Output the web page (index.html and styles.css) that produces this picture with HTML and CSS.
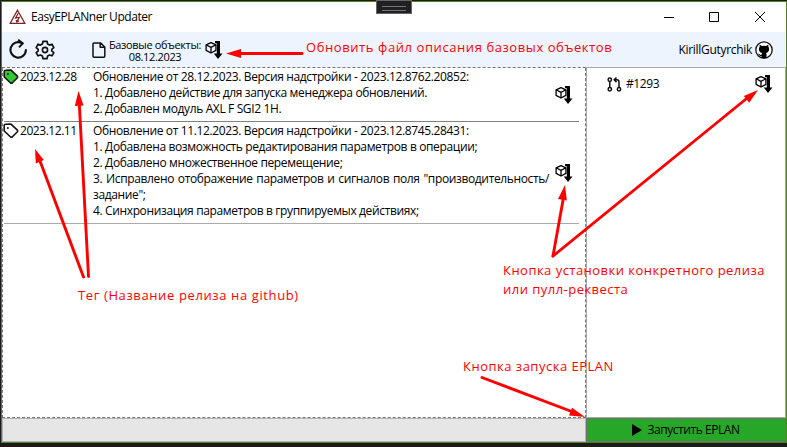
FILE: index.html
```html
<!DOCTYPE html>
<html lang="ru">
<head>
<meta charset="utf-8">
<title>EasyEPLANner Updater</title>
<link rel="stylesheet" href="styles.css">
</head>
<body>
<svg class="defs" width="0" height="0">
  <symbol id="install" viewBox="0 0 18 20">
    <path d="M6 2.6 10.9 4.8V10.4L6 13 1.1 10.4V4.8ZM1.1 4.8 6 7.4 10.9 4.8M6 7.4V13" fill="none" stroke="#000" stroke-width="1.3" stroke-linejoin="round"/>
    <path d="M10 1H15V13.5H17.5L13 19 8.8 13.5H11.8V3.2H10Z"/>
  </symbol>
  <symbol id="tag" viewBox="0 0 16 16">
    <path d="M1.2 2.6Q1.2 1.3 2.6 1.3L8 1.1 14.4 7.2Q15 8 14.4 8.8L9.2 14Q8.4 14.6 7.6 14L1.2 8Z" stroke="#111" stroke-width="1.6" stroke-linejoin="round"/>
    <circle cx="4.9" cy="4.9" r="1" fill="#111"/>
  </symbol>
</svg>
<div class="window">
  <header class="titlebar">
    <svg class="logo" width="17" height="16" viewBox="0 0 17 16" fill="none" stroke="#7c2020"><path d="M8.5 1.2 15.8 14.3H1.2Z" stroke-width="1.3"/><path d="M9.3 4.3 6.6 9 10.3 8.3 8 12.8M7.2 11 7.9 13 9.8 11.7" stroke-width="1.2"/></svg>
    <h1 class="title">EasyEPLANner Updater</h1>
    <svg class="controls" width="106" height="12" viewBox="0 0 106 12" fill="none" stroke="#000"><path d="M2 6.5H12M47.5 1.5H56.5V10.5H47.5ZM93 1 103 11M103 1 93 11"/></svg>
  </header>
  <div class="toolbar">
    <svg class="refresh" width="19" height="21" viewBox="0 0 19 21"><path d="M13.2 4.3A7.7 7.7 0 1 0 16.9 11" fill="none" stroke="#111" stroke-width="2.1" stroke-linecap="round"/><path d="M9.2.7 13.8 4.3 10 8.4" fill="none" stroke="#111" stroke-width="1.9"/></svg>
    <svg class="gear" width="20" height="20" viewBox="0 0 20 20" fill="none" stroke="#111"><path d="M8 1.3H12L12.6 4 14.5 5.1 17 4.2 18.8 7.6 16.8 9.3V10.9L18.8 12.6 17 15.8 14.5 15 12.6 16.1 12 18.7H8L7.4 16.1 5.5 15 3 15.8 1.2 12.6 3.2 10.9V9.3L1.2 7.6 3 4.2 5.5 5.1 7.4 4Z" stroke-width="1.7" stroke-linejoin="round"/><circle cx="10" cy="10" r="2.6" stroke-width="1.6"/></svg>
    <svg class="file" width="14" height="16" viewBox="0 0 14 16" fill="none" stroke="#111" stroke-width="1.5" stroke-linejoin="round"><path d="M2 .9H8.5L12.8 5V14Q12.8 15.2 11.8 15.2H2Q1 15.2 1 14V2Q1 .9 2 .9ZM8.2 1V5.3H12.8"/></svg>
    <div class="base"><span class="base-name">Базовые объекты:</span><span class="base-date">08.12.2023</span></div>
    <svg class="base-install" width="18" height="20"><use href="#install"/></svg>
    <span class="user">KirillGutyrchik</span>
    <svg class="github" width="18" height="18" viewBox="0 0 18 18"><circle cx="9" cy="9" r="8.2" fill="#fff" stroke="#111" stroke-width="1.3"/><path d="M4.8 3.7 7 5Q9 4.5 11 5L13.2 3.7Q13.6 4.8 13.3 5.8 14.5 7.4 13.9 9.4 13.2 11.5 11 11.9 11.6 12.7 11.5 13.8V17L9 17.4 6.5 17V15.2Q4.8 15.5 4 14.1L2.9 12.7Q4 12.5 4.9 13.6 5.6 14.3 6.5 13.9 6.5 12.7 7 11.9 4.8 11.5 4.1 9.4 3.5 7.4 4.7 5.8 4.4 4.8 4.8 3.7Z"/></svg>
  </div>
  <main class="content">
    <section class="releases">
      <article class="release">
        <svg class="tag tag-current" width="16" height="16"><use href="#tag"/></svg>
        <span class="tag-name">2023.12.28</span>
        <div class="notes">
          <p>Обновление от 28.12.2023. Версия надстройки - 2023.12.8762.20852:</p>
          <p>1. Добавлено действие для запуска менеджера обновлений.</p>
          <p>2. Добавлен модуль AXL F SGI2 1H.</p>
        </div>
        <svg class="install" width="18" height="20"><use href="#install"/></svg>
      </article>
      <article class="release release-last">
        <svg class="tag" width="16" height="16"><use href="#tag"/></svg>
        <span class="tag-name">2023.12.11</span>
        <div class="notes">
          <p>Обновление от 11.12.2023. Версия надстройки - 2023.12.8745.28431:</p>
          <p>1. Добавлена возможность редактирования параметров в операции;</p>
          <p>2. Добавлено множественное перемещение;</p>
          <p class="spread">3. Исправлено отображение параметров и сигналов поля "производительность/</p>
          <p>задание";</p>
          <p>4. Синхронизация параметров в группируемых действиях;</p>
        </div>
        <svg class="install" width="18" height="20"><use href="#install"/></svg>
      </article>
    </section>
    <aside class="pulls">
      <div class="pull">
        <svg width="15" height="15" viewBox="0 0 15 15" fill="none" stroke="#111" stroke-width="1.5"><circle cx="2.8" cy="2.8" r="1.7"/><circle cx="2.8" cy="12.2" r="1.7"/><circle cx="12" cy="12.2" r="1.7"/><path d="M2.8 4.5V10.5M12 10.5V5Q12 2.8 9.8 2.8H7.6M9.5.5 7.2 2.8 9.5 5.1"/></svg>
        <span class="pull-name">#1293</span>
        <svg class="pull-install" width="18" height="20"><use href="#install"/></svg>
      </div>
    </aside>
  </main>
  <footer class="footer">
    <div class="status"></div>
    <button class="launch"><svg width="10" height="12" viewBox="0 0 10 12"><path d="M0 0 10 6 0 12Z"/></svg><span class="launch-text">Запустить EPLAN</span></button>
  </footer>
</div>
<div class="grip"></div>
<svg class="arrows" width="787" height="447" viewBox="0 0 787 447">
  <g stroke="#f00" stroke-width="2.9" stroke-linecap="round" fill="none">
    <path d="M302 53.5H240"/><path d="M88.5 276.5 79.3 104"/><path d="M83.5 277 40 161"/>
    <path d="M553 256 563.4 198"/><path d="M553 256 746 99"/><path d="M482 377.5 573 412"/>
  </g>
  <g fill="#f00">
    <path d="M226 53.5 241 49V58Z"/><path d="M78.5 91 74.8 106 83.6 105.6Z"/><path d="M35 149 35.8 163.5 43.8 160Z"/>
    <path d="M565 185 558 199 566.8 200.4Z"/><path d="M758 90 743.8 96 749.2 102.8Z"/><path d="M585 417 572 407.8 569 415.4Z"/>
  </g>
</svg>
<div class="callout c-base">Обновить файл описания базовых объектов</div>
<div class="callout c-tag">Тег (Название релиза на github)</div>
<div class="callout c-install">Кнопка установки конкретного релиза<br>или пулл-реквеста</div>
<div class="callout c-launch">Кнопка запуска EPLAN</div>
</body>
</html>
```
FILE: styles.css
```css
* { box-sizing: border-box; }
body { margin: 0; width: 787px; height: 447px; padding: 1px 0 0 1px; overflow: hidden; position: relative; background: #1b1b1c; font: 12px/16px "Open Sans", "Noto Sans", sans-serif; color: #000; }
.defs { position: absolute; }
svg { display: block; flex: none; }
span, p, h1 { white-space: nowrap; }
.window { width: 786px; height: 442px; border: 1px solid #55801f; background: #fff; display: flex; flex-direction: column; }
.titlebar { height: 30px; flex: none; display: flex; align-items: center; padding: 0 18px 0 7px; }
.title { margin: 0 0 0 5px; font-size: 12px; font-weight: 400; line-height: 16px; letter-spacing: -.45px; }
.controls { margin-left: auto; }
.toolbar { height: 36px; flex: none; display: flex; align-items: center; background: #edf4fd; border-bottom: 1px dashed #777; padding-left: 7px; }
.gear { margin-left: 7px; }
.file { margin-left: 37px; }
.base { display: flex; flex-direction: column; align-items: center; width: 92px; margin-left: 3px; font-size: 11px; line-height: 12px; letter-spacing: -.35px; padding-top: 2px; }
.base-name { line-height: 11px; }
.base-date { line-height: 13px; }
.base-install { margin-left: 4px; }
.user { margin-left: auto; letter-spacing: -.3px; }
.github { margin: 0 13px 0 3px; }
.content { height: 350px; flex: none; display: flex; }
.releases { width: 584px; border-right: 1px dashed #777; border-left: 1px dashed #777; border-bottom: 1px dashed #777; padding: 0 6px 0 1px; }
.release { display: flex; height: 54px; padding-top: 1px; border-bottom: 1px solid #808080; }
.release-last { height: 102px; border-bottom-color: #aaa; }
.tag { fill: #fff; margin-left: -1px; }
.tag-current { fill: #32c832; }
.tag-name { width: 73px; margin-left: 1px; letter-spacing: -.45px; }
.notes { width: 456px; letter-spacing: -.365px; }
.notes p { margin: 0; }
.spread { text-align: justify; text-align-last: justify; }
.install { margin-left: 6px; align-self: center; }
.pulls { flex: 1; border: 1px solid #a8a8a8; margin-top: -1px; }
.pull { display: flex; align-items: center; padding: 6px 12px 0 20px; }
.pull-name { margin-left: 4px; letter-spacing: -.4px; }
.pull-install { margin-left: auto; }
.footer { flex: 1; display: flex; }
.status { width: 584px; background: #e6e6e6; border: 1px solid #b4b4b4; }
.launch { flex: 1; display: flex; align-items: center; justify-content: center; gap: 5px; border: 1px solid #707070; background: #27a727; font: inherit; color: #000; padding: 0; letter-spacing: -.45px; }
.grip { position: absolute; left: 376px; top: 0; width: 36px; height: 14px; border: 1px solid #666; background: #202022; }
.grip::after { content: ""; display: block; margin: 5px 5px 0; height: 3px; border: solid #777; border-width: 1px 0; }
.arrows { position: absolute; left: 0; top: 0; }
.callout { position: absolute; color: #f00; font-size: 13px; line-height: 19px; white-space: nowrap; letter-spacing: .5px; }
.c-base { left: 306px; top: 38px; letter-spacing: .58px; }
.c-tag { left: 78px; top: 286px; letter-spacing: .62px; }
.c-install { left: 503px; top: 261px; letter-spacing: .47px; }
.c-launch { left: 463px; top: 357px; }
```
